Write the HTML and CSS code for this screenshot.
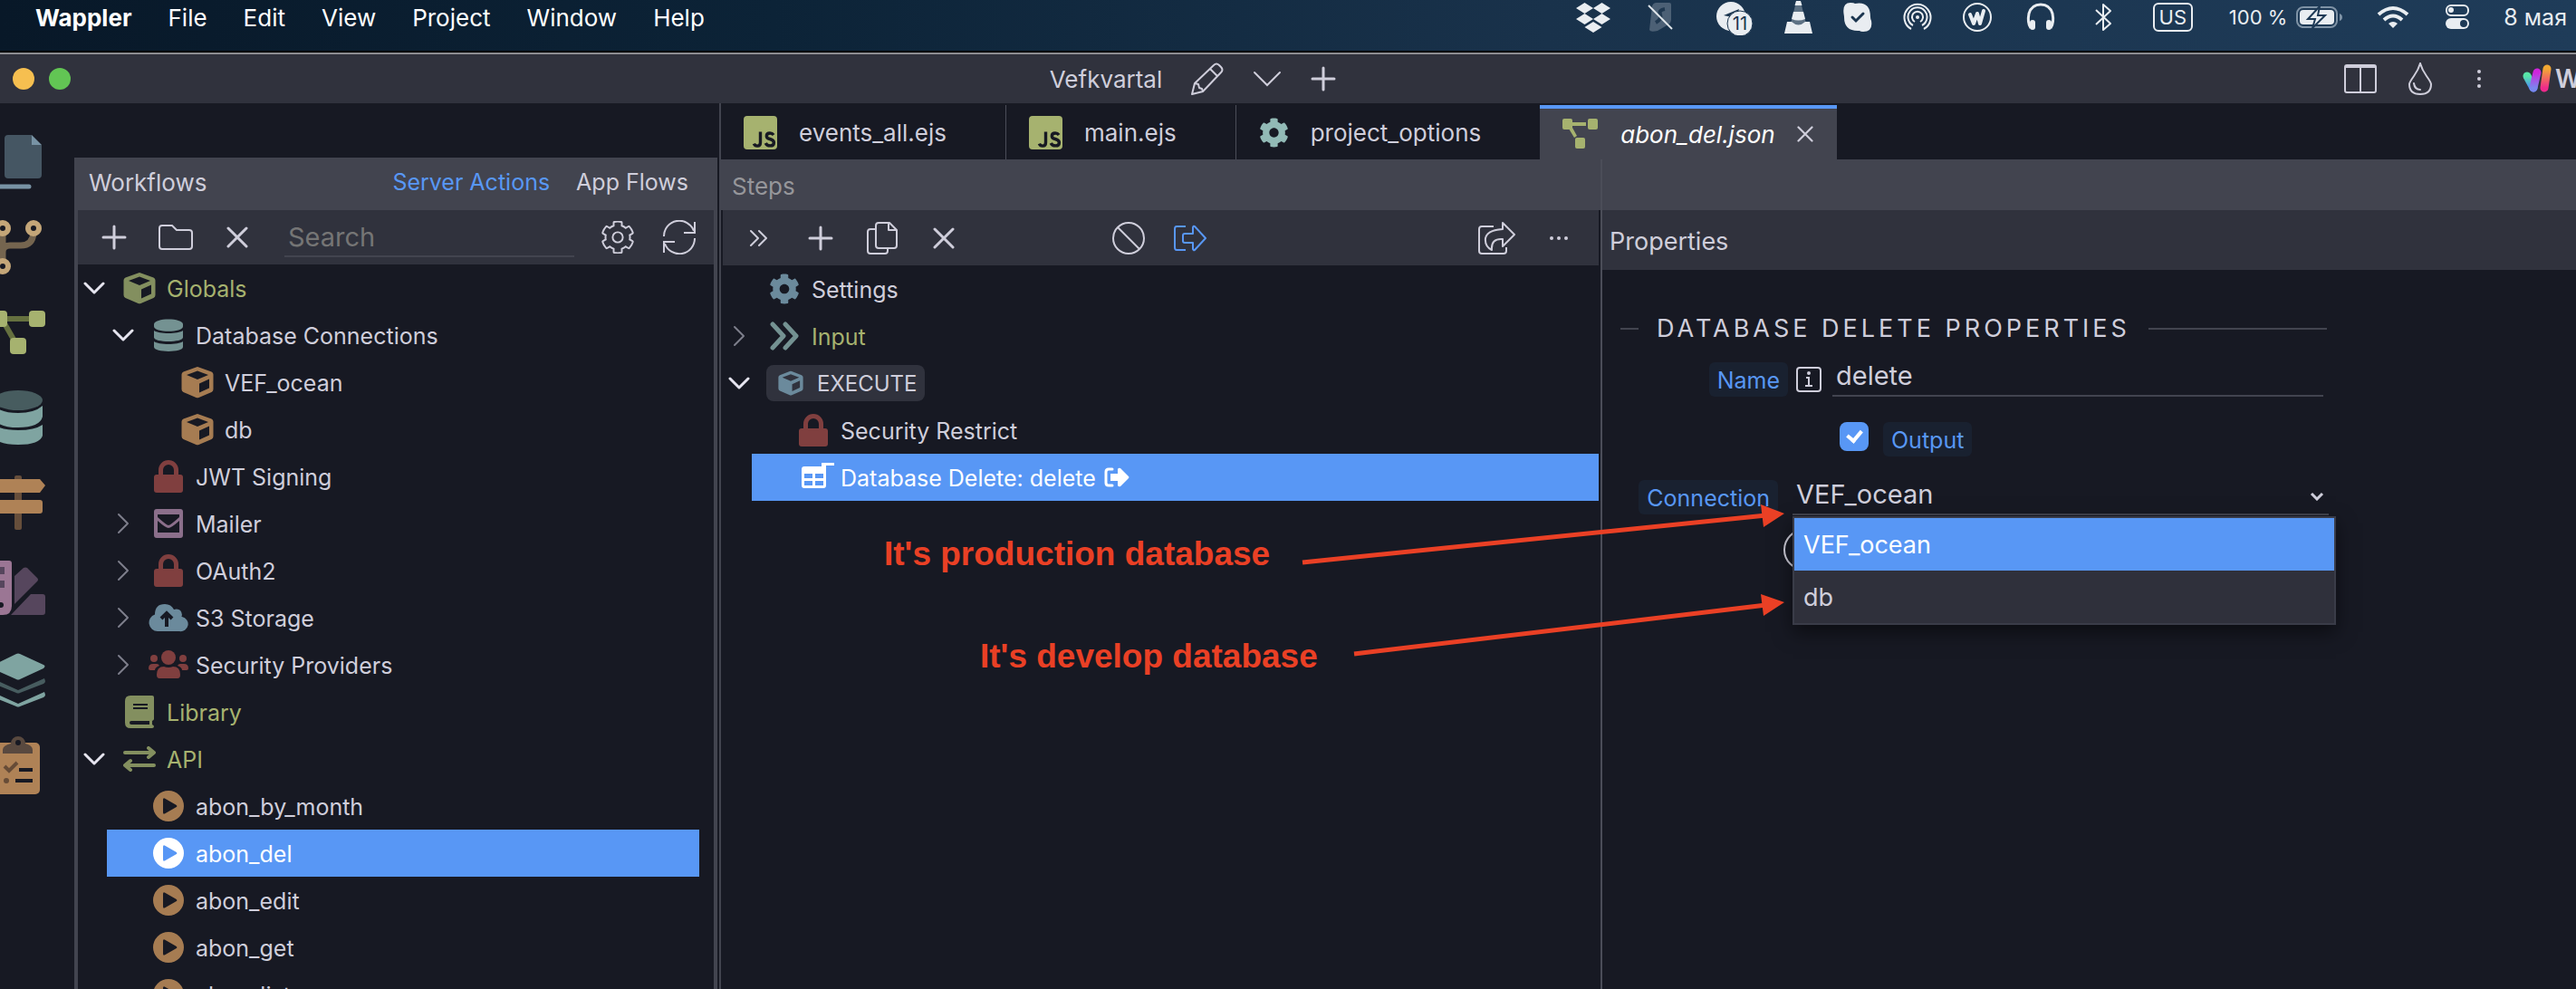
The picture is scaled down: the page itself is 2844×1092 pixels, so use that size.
FILE: index.html
```html
<!DOCTYPE html>
<html lang="en">
<head>
    <meta charset="UTF-8">
    <meta name="viewport" content="width=device-width, initial-scale=1.0">
    <title>Wappler - Vefkvartal</title>
    <link rel="stylesheet" href="styles.css">
</head>
<body>
    <!-- shared icons -->
    <svg class="sprite" aria-hidden="true">
        <symbol id="i-down" viewBox="0 0 24 14"><path d="M2 2l10 10L22 2" fill="none" stroke="currentColor" stroke-width="3" stroke-linecap="round" stroke-linejoin="round"/></symbol>
        <symbol id="i-right" viewBox="0 0 14 24"><path d="M2 2l10 10L2 22" fill="none" stroke="currentColor" stroke-width="2" stroke-linecap="round" stroke-linejoin="round"/></symbol>
        <symbol id="i-plus" viewBox="0 0 28 28"><path d="M14 2v24M2 14h24" stroke="currentColor" stroke-width="3" stroke-linecap="round"/></symbol>
        <symbol id="i-x" viewBox="0 0 24 24"><path d="M2 2l20 20M22 2L2 22" stroke="currentColor" stroke-width="3" stroke-linecap="round"/></symbol>
        <symbol id="i-cog" viewBox="0 0 512 512"><path d="M487.4 315.7l-42.6-24.6c4.3-23.2 4.3-47 0-70.2l42.6-24.6c4.9-2.8 7.1-8.6 5.5-14-11.1-35.6-30-67.8-54.7-94.6-3.8-4.1-10-5.1-14.8-2.3L380.8 110c-17.9-15.4-38.5-27.3-60.8-35.1V25.8c0-5.6-3.9-10.5-9.4-11.7-36.7-8.2-74.3-7.8-109.2 0-5.5 1.2-9.4 6.1-9.4 11.7V75c-22.2 7.9-42.8 19.8-60.8 35.1L88.7 85.5c-4.9-2.8-11-1.9-14.8 2.3-24.7 26.7-43.6 58.9-54.7 94.6-1.7 5.4.6 11.2 5.5 14L67.3 221c-4.3 23.2-4.3 47 0 70.2l-42.6 24.6c-4.9 2.8-7.1 8.6-5.5 14 11.1 35.6 30 67.8 54.7 94.6 3.8 4.1 10 5.1 14.8 2.3l42.6-24.6c17.9 15.4 38.5 27.3 60.8 35.1v49.2c0 5.6 3.9 10.5 9.4 11.7 36.7 8.2 74.3 7.8 109.2 0 5.5-1.2 9.4-6.1 9.4-11.7v-49.2c22.2-7.9 42.8-19.8 60.8-35.1l42.6 24.6c4.9 2.8 11 1.9 14.8-2.3 24.7-26.7 43.6-58.9 54.7-94.6 1.5-5.5-.7-11.3-5.6-14.1zM256 336c-44.1 0-80-35.9-80-80s35.9-80 80-80 80 35.9 80 80-35.9 80-80 80z"/></symbol>
        <symbol id="i-cube" viewBox="0 0 36 36"><path fill="currentColor" fill-rule="evenodd" d="M16.5 1.4q1.5-.6 3 0l14 5.2q2 .8 2 3v16.2q0 2.200-2 3.200l-14 6q-1.500.6-3 0l-14-6q-2-1-2-3.200V9.600q0-2.200 2-3zM18 5.500L6 10l12 5 12-5zM20 19.500V29.500l11-5V14.500z"/></symbol>
        <symbol id="i-db" viewBox="0 0 32 36"><path fill="currentColor" d="M0 6C0-1.500 32-1.500 32 6v2.500c0 7-32 7-32 0zM0 13c5 4 27 4 32 0v7.500c0 6-32 6-32 0zM0 25c5 4 27 4 32 0v6c0 6.500-32 6.500-32 0z"/></symbol>
        <symbol id="i-lock" viewBox="0 0 32 36"><path fill="none" stroke="currentColor" stroke-width="5" d="M7.500 18v-7a8.500 8.500 0 0 1 17 0v7"/><rect x="0" y="16" width="32" height="20" rx="3" fill="currentColor"/></symbol>
        <symbol id="i-play" viewBox="0 0 34 34"><path fill="currentColor" fill-rule="evenodd" d="M17 0a17 17 0 1 1 0 34a17 17 0 1 1 0-34zM11 10v14q0 2.500 2.200 1.300l12.200-7q2-1.300 0-2.600l-12.200-7Q11 7.500 11 10z"/></symbol>
        <symbol id="i-js" viewBox="0 0 38 38"><rect width="38" height="38" rx="4" fill="#a6b26f"/><path d="M19 18v12q0 4-3.500 4-2.800 0-3.800-2.500M34 21.500q-1.500-2-4.200-2-3.800 0-3.800 3.300 0 2.500 3.800 3.400 4.500 1.200 4.500 4 0 3.600-4.200 3.600-3.800 0-5.200-3" fill="none" stroke="#171923" stroke-width="3.500"/></symbol>
    </svg>

    <header class="menubar">
        <nav class="menus">
            <a href="#" class="app-name">Wappler</a>
            <a href="#">File</a>
            <a href="#">Edit</a>
            <a href="#">View</a>
            <a href="#">Project</a>
            <a href="#">Window</a>
            <a href="#">Help</a>
        </nav>
        <div class="status">
            <svg width="44" height="38" viewBox="0 0 44 38" fill="#e9edf1"><path d="M12.500 3L22 9l-9.500 6L3 9zM31.500 3L41 9l-9.500 6L22 9zM12.500 15L22 21l-9.500 6L3 21zM31.500 15L41 21l-9.500 6L22 21zM22 24l9.500 6L22 36l-9.500-6z"/></svg>
            <svg width="42" height="38" viewBox="0 0 42 38"><path d="M14 3h14q2 0 2 2v17q0 3-3 5l-12 7q-8 2-9-1L9 7q1-4 5-4z" fill="#4c6075"/><path d="M23 10q-7 1-5 6t-5 9" fill="none" stroke="#203850" stroke-width="4"/><path d="M5 6l26 26" stroke="#dfe5ea" stroke-width="2"/></svg>
            <svg width="45" height="40" viewBox="0 0 45 40"><circle cx="20" cy="19" r="16" fill="#e9edf1"/><path d="M12 18l17-7-3 10z" fill="#1b354f"/><circle cx="30" cy="27" r="14" fill="#e9edf1" stroke="#1b354f"/><text x="30" y="34" class="badge-text">11</text></svg>
            <svg width="31" height="38" viewBox="0 0 31 38"><path d="M13 2q2.500-2 5 0l6 24q-8.500 5-17 0z" fill="#5d7184"/><path d="M13 1h5l1.500 5h-8zM10 13h11l2 8q-7.500 3-15 0zM3 24h5q7.500 7 15 0h5l3 13H0z" fill="#e9edf1"/></svg>
            <svg width="32" height="38" viewBox="0 0 32 38"><path d="M8 3q4 0 5 1Q30 1 30 19q0 2 1 4 2 12-9 12-3 0-4-1Q1 35 1 19q0-1-.5-4Q-1 3 8 3z" fill="#e9edf1"/><path d="M10 19l4 4 8-8" fill="none" stroke="#1b354f" stroke-width="3" stroke-linecap="round"/></svg>
            <svg width="32" height="38" viewBox="0 0 32 38" fill="none" stroke="#e9edf1" stroke-width="2"><path d="M9 32a14.500 14.500 0 1 1 14 0M11 28a10.500 10.500 0 1 1 10 0M13 24a6 6 0 1 1 6 0"/><circle cx="16" cy="19" r="2" fill="#e9edf1" stroke="none"/></svg>
            <svg width="32" height="38" viewBox="0 0 32 38" fill="none" stroke="#e9edf1"><circle cx="16" cy="19" r="15" stroke-width="2"/><path d="M8 16l4 10 4-11 3 11 4-14" stroke-width="4" stroke-linecap="round" stroke-linejoin="round"/></svg>
            <svg width="40" height="38" viewBox="0 0 40 38"><path d="M9 31Q5 25 7 15 10 5 20 5t13 10q2 10-2 16" fill="none" stroke="#e9edf1" stroke-width="3"/><rect x="8" y="22" width="6" height="11" rx="3" fill="#e9edf1"/><rect x="26" y="22" width="6" height="11" rx="3" fill="#e9edf1"/></svg>
            <svg width="30" height="38" viewBox="0 0 30 38"><path d="M7 11l16 15-8 7V5l8 7L7 27" fill="none" stroke="#e9edf1" stroke-width="2" stroke-linejoin="round"/></svg>
            <span class="layout-flag">US</span>
            <span class="battery">
                100 %
                <svg width="53" height="38" viewBox="0 0 53 38"><rect x="1" y="8" width="44" height="22" rx="7" fill="none" stroke="#7f93a6" stroke-width="2"/><path d="M48 15q3 1 3 4t-3 4z" fill="#7f93a6"/><rect x="4" y="11" width="38" height="16" rx="4" fill="#e9edf1"/><path d="M26 7L13 21h8l-3 10 14-14h-8z" fill="#e9edf1" stroke="#1d3955" stroke-width="2"/></svg>
            </span>
            <svg width="40" height="38" viewBox="0 0 40 38" fill="none" stroke="#e9edf1" stroke-width="4"><path d="M4 16q16-14 32 0M10 22q10-9 20 0"/><path d="M15 26q5-4 10 0l-5 5z" fill="#e9edf1" stroke="none"/></svg>
            <svg width="34" height="38" viewBox="0 0 34 38"><rect x="5" y="6" width="24" height="11" rx="5" fill="none" stroke="#e9edf1" stroke-width="2"/><circle cx="10" cy="11" r="3" fill="#e9edf1"/><rect x="4" y="20" width="26" height="12" rx="6" fill="#e9edf1"/><circle cx="24" cy="26" r="4" fill="#1d3955"/></svg>
            <span class="date">8 мая</span>
        </div>
    </header>

    <div class="titlebar">
        <div class="lights"><button class="light yellow" aria-label="Minimize"></button><button class="light green" aria-label="Zoom"></button></div>
        <div class="project">
            <span class="project-name">Vefkvartal</span>
            <button aria-label="Edit project"><svg width="36" height="36" viewBox="0 0 36 36" fill="none" stroke="currentColor" stroke-width="2" stroke-linejoin="round"><path d="M1 35l3-12L25 3q3-3 6 0l2 2q3 3 0 6L13 32zM21 7l8 8M4 23l4 1 1 4 3 1 1 3"/></svg></button>
            <button aria-label="Projects"><svg width="32" height="18" viewBox="0 0 32 18"><path d="M2 2l14 14L30 2" fill="none" stroke="currentColor" stroke-width="2" stroke-linecap="round"/></svg></button>
            <button aria-label="New project"><svg width="28" height="28"><use href="#i-plus"/></svg></button>
        </div>
        <div class="window-tools">
            <button aria-label="Layout"><svg width="36" height="32" viewBox="0 0 36 32" fill="none" stroke="currentColor" stroke-width="2"><rect x="1" y="1" width="34" height="30" rx="2"/><path d="M1 3h34M18 3v28"/></svg></button>
            <button aria-label="Theme"><svg width="26" height="36" viewBox="0 0 26 36" fill="none" stroke="currentColor" stroke-width="2" stroke-linecap="round"><path d="M13 1Q15 8 20 15t5 9q0 11-12 11T1 24q0-2 5-9t7-14zM6 23q1 7 7 7"/></svg></button>
            <button aria-label="More"><svg width="6" height="22" viewBox="0 0 6 22" fill="currentColor"><circle cx="3" cy="3" r="2"/><circle cx="3" cy="11" r="2"/><circle cx="3" cy="19" r="2"/></svg></button>
            <div class="brand">
                <svg width="32" height="32" viewBox="0 0 32 32" fill="none" stroke-width="9" stroke-linecap="round">
                    <defs>
                        <linearGradient id="g1" x1="0" y1="0" x2="0" y2="1"><stop offset="0" stop-color="#57e5a8"/><stop offset="1" stop-color="#4c8cf5"/></linearGradient>
                        <linearGradient id="g2" x1="0" y1="0" x2="0" y2="1"><stop offset="0" stop-color="#d024dc"/><stop offset="1" stop-color="#7a86ee"/></linearGradient>
                        <linearGradient id="g3" x1="0" y1="0" x2="0" y2="1"><stop offset="0" stop-color="#f3a833"/><stop offset="1" stop-color="#f02a8c"/></linearGradient>
                    </defs>
                    <path d="M5 13l7 13" stroke="url(#g1)"/><path d="M16 9l-4 17" stroke="url(#g2)"/><path d="M27 5l-3 21" stroke="url(#g3)"/>
                </svg>
                <span>W</span>
            </div>
        </div>
    </div>

    <main class="workspace">
        <nav class="rail">
            <button aria-label="Files"><svg viewBox="0 0 52 64"><path d="M9 2h26v11h11v33q0 4-4 4H9q-4 0-4-4V6q0-4 4-4z" fill="#455663"/><path d="M35 2l11 11H35z" fill="#7893a5"/><path d="M-4 20v36q0 3 4 3h32" fill="none" stroke="#7893a5" stroke-width="5" stroke-linecap="round"/></svg></button>
            <button aria-label="Git"><svg viewBox="0 0 52 64" fill="none"><path d="M3 16v30M3 37q0-7 8-7h12q13 0 14-14" stroke="#75654f" stroke-width="7"/><g stroke="#c4a678" stroke-width="6"><circle cx="3" cy="11" r="6"/><circle cx="37" cy="11" r="6"/><circle cx="3" cy="53" r="6"/></g></svg></button>
            <button aria-label="Workflows"><svg viewBox="0 0 52 64"><path d="M2 17h36M2 17l16 28" stroke="#65703f" stroke-width="6"/><g fill="#a6b26f"><rect x="-10" y="8" width="18" height="18" rx="4"/><rect x="32" y="8" width="18" height="18" rx="4"/><rect x="11" y="38" width="18" height="18" rx="4"/></g></svg></button>
            <button aria-label="Databases"><svg viewBox="0 0 52 64"><ellipse cx="20" cy="13" rx="27" ry="11" fill="#475c5f"/><path d="M-7 19q9 8 27 8t27-8v12q-3 12-27 12T-7 31zM-7 40q9 6 27 6t27-6v12q-3 10-27 10T-7 52z" fill="#7fa4a1"/></svg></button>
            <button aria-label="Routes"><svg viewBox="0 0 52 64"><rect x="16" y="2" width="8" height="60" rx="2" fill="#664e3b"/><path d="M-4 6h48l6 7-6 8H-4zM-4 29h48q3 0 3 3v9q0 3-3 3H-4z" fill="#af8256"/></svg></button>
            <button aria-label="Styles"><svg viewBox="0 0 52 64"><path d="M16 19l10-9q2-1 4 0l11 11q2 2 0 4L16 50zM34 39h13q3 0 3 3v17q0 3-3 3H12z" fill="#56465d"/><path d="M-8 2h18q3 0 3 3v47q0 10-10 10H-8z" fill="#9b7694"/><path d="M-2 9h7v8h-7zM-2 24h7v8h-7z" fill="#56465d"/><circle cx="1" cy="51" r="3" fill="#171923"/></svg></button>
            <button class="spaced" aria-label="Layers"><svg viewBox="0 0 52 64"><path d="M-9 45l29 13 29-13 1 3q0 2-2 3L22 61q-2 1-4 0L-9 50z" fill="#7fa4a1"/><path d="M-9 30l29 13 29-13 1 3q0 2-2 3L22 46q-2 1-4 0L-9 35z" fill="#475c5f"/><path d="M-9 16L18 3q2-1 4 0l26 12q3 1 0 4L22 31q-2 1-4 0L-9 19z" fill="#7fa4a1"/></svg></button>
            <button aria-label="Tasks"><svg viewBox="0 0 52 64"><rect x="-8" y="7" width="52" height="57" rx="5" fill="#af8256"/><path d="M3 19v-4q0-5 9-7a8 8 0 0 1 16 0q8 2 8 7v4z" fill="#59493f"/><circle cx="20" cy="7" r="3" fill="#171923"/><path d="M5 33l5 5 9-9" fill="none" stroke="#674c37" stroke-width="4"/><circle cx="7" cy="49" r="3" fill="#674c37"/><path d="M21 37h15M17 49h19" stroke="#171923" stroke-width="4"/></svg></button>
        </nav>

        <section class="flows">
            <div class="flows-head">
                <h2>Workflows</h2>
                <a href="#" class="current">Server Actions</a>
                <a href="#">App Flows</a>
            </div>
            <div class="toolbar">
                <button aria-label="Add"><svg width="28" height="28"><use href="#i-plus"/></svg></button>
                <button aria-label="New folder"><svg width="38" height="30" viewBox="0 0 38 30" fill="none" stroke="currentColor" stroke-width="2"><path d="M4 2h11l5 5h14q3 0 3 3v15q0 3-3 3H4q-3 0-3-3V5q0-3 3-3z"/></svg></button>
                <button aria-label="Delete"><svg width="24" height="24"><use href="#i-x"/></svg></button>
                <input type="text" class="search" placeholder="Search" aria-label="Search">
                <button aria-label="Options"><svg class="outline" width="36" height="36"><use href="#i-cog"/></svg></button>
                <button aria-label="Refresh"><svg width="38" height="38" viewBox="0 0 38 38" fill="none" stroke="currentColor" stroke-width="2"><path d="M2 18a17 17 0 0 1 33-6M36 2v12H24M36 20a17 17 0 0 1-33 6M2 36V24h12"/></svg></button>
            </div>
            <ul class="tree">
                <li class="row group open"><button class="toggle" aria-label="Collapse"><svg width="24" height="14"><use href="#i-down"/></svg></button><span class="icon green"><svg width="36" height="36"><use href="#i-cube"/></svg></span><a href="#">Globals</a></li>
                <li class="row lvl-1 open"><button class="toggle" aria-label="Collapse"><svg width="24" height="14"><use href="#i-down"/></svg></button><span class="icon teal"><svg width="32" height="36"><use href="#i-db"/></svg></span><a href="#">Database Connections</a></li>
                <li class="row lvl-2"><span class="toggle"></span><span class="icon orange"><svg width="36" height="36"><use href="#i-cube"/></svg></span><a href="#">VEF_ocean</a></li>
                <li class="row lvl-2"><span class="toggle"></span><span class="icon orange"><svg width="36" height="36"><use href="#i-cube"/></svg></span><a href="#">db</a></li>
                <li class="row lvl-1"><span class="toggle"></span><span class="icon red"><svg width="32" height="36"><use href="#i-lock"/></svg></span><a href="#">JWT Signing</a></li>
                <li class="row lvl-1"><button class="toggle" aria-label="Expand"><svg width="14" height="24"><use href="#i-right"/></svg></button><span class="icon purple"><svg width="32" height="32" viewBox="0 0 32 32"><rect width="32" height="32" rx="3" fill="currentColor"/><path d="M4 6h24v3q-10 9-12 9T4 9zM4 13q9 8 12 8t12-8v13H4z" fill="#171923"/></svg></span><a href="#">Mailer</a></li>
                <li class="row lvl-1"><button class="toggle" aria-label="Expand"><svg width="14" height="24"><use href="#i-right"/></svg></button><span class="icon red"><svg width="32" height="36"><use href="#i-lock"/></svg></span><a href="#">OAuth2</a></li>
                <li class="row lvl-1"><button class="toggle" aria-label="Expand"><svg width="14" height="24"><use href="#i-right"/></svg></button><span class="icon blue"><svg width="44" height="32" viewBox="0 0 44 32"><path d="M10 31a9.500 9.500 0 0 1-3-18.500Q7 1 18 1q7 0 10 6 8-2 9 6-1 2 0 2a8 8 0 0 1-3 16z" fill="currentColor"/><path d="M20 26V12M14 17l6-6 6 6" fill="none" stroke="#171923" stroke-width="4"/></svg></span><a href="#">S3 Storage</a></li>
                <li class="row lvl-1"><button class="toggle" aria-label="Expand"><svg width="14" height="24"><use href="#i-right"/></svg></button><span class="icon red"><svg width="44" height="32" viewBox="0 0 44 32" fill="currentColor"><circle cx="22" cy="8" r="8"/><circle cx="6" cy="9" r="4"/><circle cx="38" cy="9" r="4"/><path d="M9 27q0-9 8-9 5 2 10 0 8 0 8 9 0 4-3 4H12q-3 0-3-4zM0 20q0-5 5-5h4q2 0 3 2-5 2-5 5H2q-2 0-2-2zM44 20q0-5-5-5h-4q-2 0-3 2 5 2 5 5h5q2 0 2-2z"/></svg></span><a href="#">Security Providers</a></li>
                <li class="row group"><span class="toggle"></span><span class="icon green"><svg width="32" height="36" viewBox="0 0 32 36"><path d="M6 0h24q2 0 2 2v24q0 1-2 2v4q2 1 2 2 0 2-2 2H6q-6 0-6-6V6q0-6 6-6z" fill="currentColor"/><path d="M9 10h16M9 14h16" stroke="#171923" stroke-width="2"/><path d="M7 28h20v4H7q-2 0-2-2t2-2z" fill="#171923"/></svg></span><a href="#">Library</a></li>
                <li class="row group open"><button class="toggle" aria-label="Collapse"><svg width="24" height="14"><use href="#i-down"/></svg></button><span class="icon green"><svg width="36" height="28" viewBox="0 0 36 28" fill="none" stroke="currentColor" stroke-width="4" stroke-linecap="round" stroke-linejoin="round"><path d="M2 7h31M28 2l6 5-6 5M34 21H3M8 16l-6 5 6 5"/></svg></span><a href="#">API</a></li>
                <li class="row lvl-1"><span class="toggle"></span><span class="icon orange"><svg width="34" height="34"><use href="#i-play"/></svg></span><a href="#">abon_by_month</a></li>
                <li class="row lvl-1 selected"><span class="toggle"></span><span class="icon"><svg width="34" height="34"><use href="#i-play"/></svg></span><a href="#">abon_del</a></li>
                <li class="row lvl-1"><span class="toggle"></span><span class="icon orange"><svg width="34" height="34"><use href="#i-play"/></svg></span><a href="#">abon_edit</a></li>
                <li class="row lvl-1"><span class="toggle"></span><span class="icon orange"><svg width="34" height="34"><use href="#i-play"/></svg></span><a href="#">abon_get</a></li>
                <li class="row lvl-1"><span class="toggle"></span><span class="icon orange"><svg width="34" height="34"><use href="#i-play"/></svg></span><a href="#">abon_list</a></li>
            </ul>
        </section>

        <section class="editor">
            <div class="tabs">
                <a href="#" class="tab"><svg width="37" height="37"><use href="#i-js"/></svg>events_all.ejs</a>
                <a href="#" class="tab"><svg width="37" height="37"><use href="#i-js"/></svg>main.ejs</a>
                <a href="#" class="tab"><svg class="mint" width="33" height="33"><use href="#i-cog"/></svg>project_options</a>
                <div class="tab active">
                    <svg width="40" height="34" viewBox="0 0 40 34" fill="#a6b26f"><rect width="11" height="12" rx="2"/><rect x="28" width="11" height="12" rx="2"/><rect x="14" y="21" width="11" height="12" rx="2"/><path d="M9 4h17v4H9zM7 11l4-1 5 9-3 2z"/></svg>
                    <a href="#">abon_del.json</a>
                    <button aria-label="Close tab"><svg width="18" height="18"><use href="#i-x"/></svg></button>
                </div>
            </div>

            <div class="split">
                <section class="steps">
                    <h2 class="steps-head">Steps</h2>
                    <div class="toolbar">
                        <button aria-label="Expand all"><svg width="22" height="20" viewBox="0 0 22 20" fill="none" stroke="currentColor" stroke-width="2" stroke-linecap="round" stroke-linejoin="round"><path d="M2 2l8 8-8 8M11 2l8 8-8 8"/></svg></button>
                        <button aria-label="Add step"><svg width="28" height="28"><use href="#i-plus"/></svg></button>
                        <button aria-label="Copy"><svg width="34" height="38" viewBox="0 0 34 38" fill="none" stroke="currentColor" stroke-width="2" stroke-linejoin="round"><path d="M13 2h12l8 8v17q0 3-3 3H13q-3 0-3-3V5q0-3 3-3zM24 2v8h8M10 9H4q-3 0-3 3v21q0 3 3 3h16q3 0 3-3v-2"/></svg></button>
                        <button aria-label="Delete step"><svg width="24" height="24"><use href="#i-x"/></svg></button>
                        <span class="spacer"></span>
                        <button aria-label="Disable"><svg width="36" height="36" viewBox="0 0 36 36" fill="none" stroke="currentColor" stroke-width="2"><circle cx="18" cy="18" r="17"/><path d="M6 6l24 24"/></svg></button>
                        <button class="accent" aria-label="Output"><svg width="38" height="30" viewBox="0 0 38 30" fill="none" stroke="currentColor" stroke-width="2" stroke-linejoin="round"><path d="M14 2H4Q2 2 2 5v20q0 3 2 3h10M13 10h9V3q1-2 2-1l12 13-12 13q-1 1-2-1v-7h-9q-2 0-2-2v-6q0-2 2-2z"/></svg></button>
                        <button class="push" aria-label="Open in"><svg width="42" height="38" viewBox="0 0 42 38" fill="none" stroke="currentColor" stroke-width="2" stroke-linejoin="round"><path d="M17 6H4Q1 6 1 9v24q0 3 3 3h24q3 0 3-3v-4M27 2l13 13-13 13v-8q-13-1-12 12Q7 28 8 19q2-9 19-10z"/></svg></button>
                        <button aria-label="More"><svg width="22" height="6" viewBox="0 0 22 6" fill="currentColor"><circle cx="3" cy="3" r="2"/><circle cx="11" cy="3" r="2"/><circle cx="19" cy="3" r="2"/></svg></button>
                    </div>
                    <ul class="tree">
                        <li class="row"><span class="toggle"></span><span class="icon blue"><svg width="34" height="34"><use href="#i-cog"/></svg></span><a href="#">Settings</a></li>
                        <li class="row group"><button class="toggle" aria-label="Expand"><svg width="14" height="24"><use href="#i-right"/></svg></button><span class="icon teal"><svg width="32" height="32" viewBox="0 0 32 32" fill="none" stroke="currentColor" stroke-width="5" stroke-linecap="round" stroke-linejoin="round"><path d="M3 3l12 13L3 29M17 3l12 13-12 13"/></svg></span><a href="#">Input</a></li>
                        <li class="row open"><button class="toggle" aria-label="Collapse"><svg width="24" height="14"><use href="#i-down"/></svg></button><a href="#" class="pill"><svg class="blue" width="28" height="28"><use href="#i-cube"/></svg>EXECUTE</a></li>
                        <li class="row lvl-1"><span class="toggle"></span><span class="icon red"><svg width="32" height="36"><use href="#i-lock"/></svg></span><a href="#">Security Restrict</a></li>
                        <li class="row lvl-1 selected"><span class="toggle"></span><span class="icon"><svg width="48" height="32" viewBox="-10 0 48 32"><path fill="currentColor" fill-rule="evenodd" d="M4 4h19V0h14v3H28v22q0 3-3 3H4q-3 0-3-3V7q0-3 3-3zM4 12v5h9v-5zM16 12v5h9v-5zM4 20v5h9v-5zM16 20v5h9v-5z"/></svg></span><a href="#">Database Delete: delete</a><svg class="out" width="28" height="22" viewBox="0 0 28 22"><path d="M9 2H5Q2 2 2 5v12q0 3 3 3h4" fill="none" stroke="currentColor" stroke-width="3" stroke-linecap="round"/><path d="M7 7h8V2q1-2 3-1l9 9q1 1 0 2l-9 9q-2 1-3-1v-5H7z" fill="currentColor"/></svg></li>
                    </ul>
                </section>

                <section class="props">
                    <h2 class="props-head">Properties</h2>
                    <form class="form">
                        <h3 class="legend">DATABASE DELETE PROPERTIES</h3>
                        <div class="field">
                            <div class="label-cell"><label for="name">Name</label></div>
                            <svg class="info" width="28" height="28" viewBox="0 0 28 28" fill="none" stroke="currentColor" stroke-width="2"><rect x="1" y="1" width="26" height="26" rx="3"/><path d="M11 12h3v9M10 21h8"/><circle cx="14" cy="7" r="1"/></svg>
                            <input type="text" id="name" value="delete">
                        </div>
                        <div class="field output">
                            <input type="checkbox" id="output" checked>
                            <label for="output">Output</label>
                        </div>
                        <div class="field connection">
                            <div class="label-cell"><label for="connection">Connection</label></div>
                            <div class="select">
                                <select id="connection">
                                    <option selected>VEF_ocean</option>
                                    <option>db</option>
                                </select>
                                <svg class="caret" width="16" height="10" viewBox="0 0 16 10"><path d="M2 2l6 6 6-6" fill="none" stroke="currentColor" stroke-width="3"/></svg>
                                <ul class="options" role="listbox" aria-label="Connection">
                                    <li role="option" aria-selected="true">VEF_ocean</li>
                                    <li role="option" aria-selected="false">db</li>
                                </ul>
                            </div>
                        </div>
                        <button type="button" class="round" aria-label="Query options"></button>
                    </form>
                </section>
            </div>
        </section>
    </main>

    <!-- notes drawn over the editor -->
    <svg class="notes" width="1100" height="200" viewBox="900 550 1100 200">
        <text x="976" y="624">It's production database</text>
        <text x="1082" y="737">It's develop database</text>
        <path d="M1438 621L1950 569M1495 722L1950 668"/>
        <path class="head" d="M1970 567l-26-10 3 25zM1970 665l-26-9 3 24z"/>
    </svg>
</body>
</html>
```

FILE: styles.css
```css
* {
    box-sizing: border-box;
}
body {
    margin: 0;
    height: 100vh;
    overflow: hidden;
    display: flex;
    flex-direction: column;
    background-color: #171923;
    color: #cfcedb;
    font-family: Inter, "Noto Sans", sans-serif;
    font-size: 26px;
}
h2, h3, ul {
    margin: 0;
    padding: 0;
    font-weight: 400;
    font-size: 26px;
}
ul {
    list-style: none;
}
a {
    color: inherit;
    text-decoration: none;
}
button {
    padding: 0;
    border: none;
    background: none;
    color: inherit;
    display: flex;
    align-items: center;
    justify-content: center;
    cursor: pointer;
}
svg {
    flex: none;
    display: block;
}
input, select {
    font-family: inherit;
    color: inherit;
    background: none;
    border: none;
    border-radius: 0;
    outline: none;
}
.sprite {
    position: absolute;
    width: 0;
    height: 0;
}

/* system menu */
.menubar {
    flex: none;
    height: 58px;
    padding: 0 10px 18px 39px;
    border-bottom: 2px solid #000;
    background: linear-gradient(90deg, #081828, #0c2337 30%, #19324b 60%, #1f3c59);
    color: #fff;
    display: flex;
    justify-content: space-between;
    align-items: center;
    white-space: nowrap;
}
.menus {
    display: flex;
    gap: 40px;
}
.app-name {
    font-weight: 700;
}
.status {
    display: flex;
    align-items: center;
    gap: 34px;
    color: #e9edf1;
}
.badge-text {
    font-size: 20px;
    text-anchor: middle;
    fill: #1b354f;
}
.layout-flag {
    margin: 0 6px;
    width: 44px;
    height: 32px;
    line-height: 28px;
    border: 2px solid #e9edf1;
    border-radius: 6px;
    font-size: 22px;
    text-align: center;
}
.battery {
    display: flex;
    align-items: center;
    gap: 10px;
    font-size: 22px;
}
.date {
    font-size: 25px;
}

/* window title */
.titlebar {
    flex: none;
    height: 56px;
    padding-left: 14px;
    border-top: 2px solid #8d8d91;
    background-color: #30323d;
    display: flex;
    align-items: center;
    justify-content: space-between;
}
.lights {
    display: flex;
    gap: 16px;
}
.light {
    width: 24px;
    height: 24px;
    border-radius: 50%;
}
.yellow {
    background-color: #f6bf50;
}
.green.light {
    background-color: #62c554;
}
.project {
    display: flex;
    align-items: center;
    gap: 32px;
    padding-right: 32px;
}
.window-tools {
    display: flex;
    align-items: center;
    gap: 35px;
    width: 256px;
    overflow: hidden;
}
.window-tools button:nth-child(3) {
    margin-left: 14px;
    margin-right: 10px;
}
.brand {
    display: flex;
    align-items: center;
    gap: 4px;
    font-size: 28px;
    font-weight: 600;
}

/* main area */
.workspace {
    flex: 1;
    min-height: 0;
    display: grid;
    grid-template-columns: 82px 710px minmax(0, 1fr);
}
.rail {
    padding-top: 18px;
}
.rail button {
    width: 52px;
    height: 94px;
}
.rail svg {
    width: 52px;
    height: 64px;
}
.rail .spaced {
    margin-top: 8px;
}
.flows {
    margin-top: 60px;
    border: 4px solid #42444f;
    border-width: 0 4px;
    overflow: hidden;
}
.flows-head {
    height: 58px;
    padding: 0 28px 4px 12px;
    background-color: #42444f;
    display: flex;
    align-items: center;
    gap: 29px;
    font-size: 25px;
}
.flows-head h2 {
    margin-right: auto;
}
.flows-head .current, .accent {
    color: #5897f5;
}
.toolbar {
    height: 60px;
    padding: 0 4px 0 6px;
    background-color: #30323d;
    display: flex;
    align-items: center;
}
.toolbar button {
    width: 68px;
    height: 60px;
}
.outline {
    fill: none;
    stroke: currentColor;
    stroke-width: 28;
    overflow: visible;
}
.search {
    flex: 1;
    min-width: 0;
    height: 44px;
    margin: 0 14px 0 18px;
    padding: 0 4px;
    border-bottom: 2px solid #42444f;
    font-size: 29px;
}
.search::placeholder {
    color: #757575;
    opacity: 1;
}

/* trees */
.row {
    height: 52px;
    margin-right: 16px;
    display: flex;
    align-items: center;
    white-space: nowrap;
    font-size: 25px;
}
.row > a {
    padding-top: 2px;
}
.lvl-1 {
    margin-left: 32px;
}
.lvl-2 {
    margin-left: 64px;
}
.toggle {
    flex: none;
    width: 36px;
    height: 52px;
    margin-right: 10px;
    color: #7d7e8b;
}
.open .toggle {
    color: #e6e5f0;
}
.icon {
    flex: none;
    width: 44px;
    margin-right: 8px;
    display: flex;
    justify-content: center;
    fill: currentColor;
}
.group a {
    color: #a6b26f;
}
.green {
    color: #838f5f;
}
.teal {
    color: #749292;
}
.orange {
    color: #a67c52;
}
.red {
    color: #803f3f;
}
.purple {
    color: #8b6f8b;
}
.blue {
    color: #6b8a9c;
    fill: #6b8a9c;
}
.selected {
    background-color: #5897f5;
    color: #fff;
}
.row .pill {
    height: 40px;
    margin-left: 2px;
    padding: 0 8px 0 13px;
    border-radius: 8px;
    background-color: #30323d;
    display: flex;
    align-items: center;
    gap: 15px;
    font-size: 24px;
}
.out {
    margin-left: 9px;
}

/* editor */
.editor {
    margin-left: 2px;
    border-left: 2px solid #42444f;
    display: flex;
    flex-direction: column;
}
.tabs {
    flex: none;
    height: 62px;
    padding-top: 2px;
    display: flex;
    white-space: nowrap;
}
.tab {
    padding: 0 65px 0 25px;
    border-right: 1px solid #4b4d58;
    display: flex;
    align-items: center;
    gap: 24px;
}
.tab:nth-child(3) {
    border-right: none;
}
.mint {
    fill: #92bab6;
}
.active {
    padding-right: 26px;
    border-right: none;
    border-top: 4px solid #5897f5;
    background-color: #42444f;
    color: #fff;
    font-style: italic;
}
.active button {
    color: #cfcedb;
}
.split {
    flex: 1;
    display: grid;
    grid-template-columns: minmax(0, 971fr) minmax(0, 1077fr);
    background: linear-gradient(#42444f 56px, transparent 56px);
}
.steps {
    padding: 0 2px;
}
.steps-head {
    height: 56px;
    padding-left: 10px;
    line-height: 60px;
    color: #96969a;
}
.steps .toolbar {
    height: 61px;
    padding-right: 10px;
}
.steps .row {
    margin-right: 0;
}
.spacer {
    width: 136px;
}
.push {
    margin-left: auto;
}

/* properties */
.props {
    border-left: 2px solid #4b4d58;
}
.props-head {
    margin-top: 56px;
    height: 66px;
    padding-left: 8px;
    line-height: 70px;
    font-size: 27px;
    background-color: #30323d;
}
.form {
    max-width: 800px;
    padding: 48px 0 0 20px;
}
.legend {
    margin-bottom: 20px;
    font-size: 27px;
    line-height: 34px;
    letter-spacing: 4px;
    white-space: nowrap;
    display: flex;
    align-items: center;
    gap: 20px;
}
.legend::before, .legend::after {
    content: "";
    height: 2px;
    width: 20px;
    background-color: #42444f;
}
.legend::after {
    width: auto;
    flex: 1;
}
.field {
    height: 38px;
    margin-bottom: 27px;
    display: flex;
    align-items: center;
}
.label-cell {
    width: 185px;
    display: flex;
    justify-content: flex-end;
}
.field label {
    height: 38px;
    padding: 0 9px;
    border-radius: 6px;
    background-color: #192130;
    color: #5897f5;
    font-size: 25px;
    line-height: 40px;
}
.info {
    margin: 0 12px 0 9px;
}
.field input[type="text"] {
    flex: 1;
    min-width: 0;
    height: 52px;
    margin: -14px 4px 0 0;
    padding: 6px 4px 0;
    border-bottom: 2px solid #42444f;
    font-size: 29px;
}
.output {
    padding-left: 242px;
    gap: 16px;
}
.output label {
    margin-top: 2px;
}
.output input {
    appearance: none;
    width: 32px;
    height: 32px;
    margin: -4px 0 0;
    border-radius: 8px;
    background-color: #5897f5;
    display: grid;
    place-items: center;
}
.output input:checked::after {
    content: "";
    width: 7px;
    height: 12px;
    margin-top: -4px;
    border: solid #fff;
    border-width: 0 4px 4px 0;
    transform: rotate(40deg);
}
.connection {
    margin-bottom: 16px;
}
.connection .label-cell {
    width: 174px;
    margin-right: 16px;
}
.select {
    flex: 1;
    position: relative;
    margin-right: -2px;
}
.select select {
    appearance: none;
    display: block;
    width: 100%;
    height: 48px;
    margin-top: -8px;
    padding: 3px 4px 0;
    border-bottom: 2px solid #42444f;
    font-size: 29px;
}
.caret {
    position: absolute;
    top: 14px;
    right: 5px;
}
.options {
    position: absolute;
    z-index: 1;
    top: 100%;
    left: 0;
    right: -8px;
    margin-top: 1px;
    border: 2px solid #3a3c48;
    background-color: #2f303b;
    box-shadow: 0 8px 20px rgba(0, 0, 0, 0.5);
}
.options li {
    height: 58px;
    padding-left: 10px;
    line-height: 60px;
    font-size: 27px;
}
.options [aria-selected="true"] {
    background-color: #5897f5;
    color: #fff;
}
.round {
    width: 46px;
    height: 46px;
    margin-left: 180px;
    border: 2px solid #cfcedb;
    border-radius: 50%;
}

/* notes */
.notes {
    position: absolute;
    z-index: 2;
    left: 900px;
    top: 550px;
    pointer-events: none;
    fill: #ea4025;
    font-family: "Liberation Sans", Arial, sans-serif;
    font-size: 37px;
    font-weight: 700;
}
.notes path {
    stroke: #ea4025;
    stroke-width: 5;
}
.notes .head {
    stroke: none;
}
```
